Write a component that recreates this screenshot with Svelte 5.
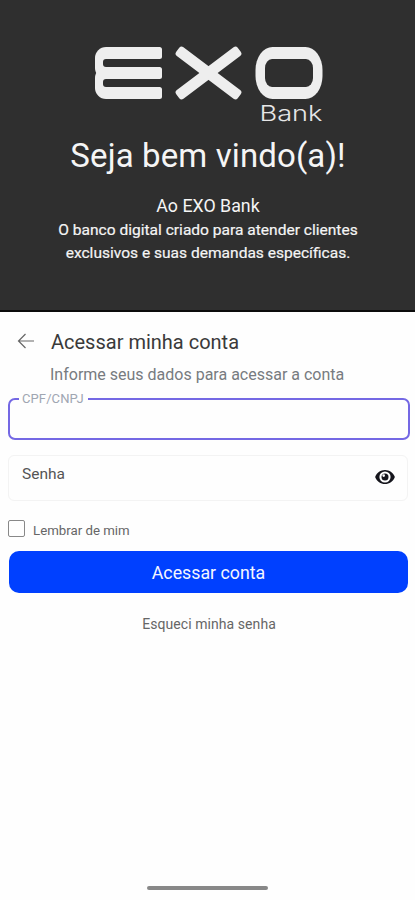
<script>
    let document = $state("");
    let password = $state("");
    let remember = $state(false);
    let visible = $state(false);
</script>

<div class="screen">
    <header>
        <svg class="logo" viewBox="0 0 236 86" role="img" aria-label="EXO Bank">
            <g fill="#eeeeee">
                <rect x="1" y="1" width="40" height="32" rx="11" />
                <rect x="1" y="21" width="40" height="32" rx="11" />
                <rect x="14" y="1" width="54" height="12" rx="2.5" />
                <rect x="14" y="21" width="54" height="12" rx="2.5" />
                <rect x="14" y="41" width="54" height="12" rx="2.5" />
                <rect x="76" y="21.5" width="77" height="11" rx="3" transform="rotate(37 114.5 27)" />
                <rect x="76" y="21.5" width="77" height="11" rx="3" transform="rotate(-37 114.5 27)" />
                <rect x="161.5" y="1" width="67" height="52" rx="17" ry="23" />
            </g>
            <g fill="#2f2f2f">
                <rect x="9" y="13" width="60" height="8" rx="3" />
                <rect x="9" y="33" width="60" height="8" rx="3" />
                <rect x="171" y="13" width="48" height="28" rx="7" ry="9" />
            </g>
            <text x="165.5" y="75" textLength="63" lengthAdjust="spacingAndGlyphs">Bank</text>
        </svg>
        <h1>Seja bem vindo(a)!</h1>
        <h2>Ao EXO Bank</h2>
        <p>O banco digital criado para atender clientes<br />exclusivos e suas demandas específicas.</p>
    </header>

    <main>
        <div class="title">
            <button class="back" aria-label="Voltar">
                <svg viewBox="0 0 18 16"><path d="M17 8H1.5M8.5 1L1.5 8l7 7" /></svg>
            </button>
            <h3>Acessar minha conta</h3>
        </div>
        <p class="subtitle">Informe seus dados para acessar a conta</p>

        <fieldset>
            <legend>CPF/CNPJ</legend>
            <input aria-label="CPF/CNPJ" bind:value={document} />
        </fieldset>

        <div class="password">
            <input type={visible ? "text" : "password"} placeholder="Senha" bind:value={password} />
            <button aria-label="Mostrar senha" onclick={() => visible = !visible}>
                <svg viewBox="0 0 20 14">
                    <path d="M10 0C5.5 0 2 2.800.4 6.300a1.500 1.500 0 0 0 0 1.400C2 11.200 5.500 14 10 14s8-2.800 9.600-6.300a1.500 1.500 0 0 0 0-1.400C18 2.800 14.500 0 10 0z" />
                    <circle cx="10" cy="7" r="5.600" fill="#fff" />
                    <circle cx="10" cy="7" r="3.500" />
                    <circle cx="8.700" cy="5.600" r="1.300" fill="#fff" />
                </svg>
            </button>
        </div>

        <label>
            <input type="checkbox" bind:checked={remember} />
            <span>Lembrar de mim</span>
        </label>

        <button class="submit">Acessar conta</button>
        <button class="forgot">Esqueci minha senha</button>
    </main>

    <div class="home"></div>
</div>

<style>
    :global(body) {
        margin: 0;
        background: #fefefe;
    }

    .screen {
        display: flex;
        flex-direction: column;
        height: 900px;
        font-family: Roboto, "Liberation Sans", sans-serif;
        background: #fefefe;
    }

    header {
        box-sizing: border-box;
        display: flex;
        flex-direction: column;
        align-items: center;
        height: 312px;
        padding: 46px 0 0 1px;
        color: #f5f5f5;
        text-align: center;
        background: #2f2f2f;
        border-bottom: 2px solid #0c0c0c;
    }

    .logo {
        width: 236px;
        height: 86px;
        flex-shrink: 0;
        margin-left: 7px;
        overflow: visible;
    }

    .logo text {
        fill: #e6e6e6;
        font-family: Inter, sans-serif;
        font-size: 22px;
        font-weight: 300;
    }

    h1, h2, h3, p {
        margin: 0;
        font-weight: 400;
    }

    h1 {
        margin-top: 4px;
        font-size: 33px;
        line-height: 40px;
        letter-spacing: 0.12px;
    }

    h2 {
        margin-top: 18px;
        font-size: 17.8px;
        line-height: 23px;
    }

    header p {
        margin-top: 2px;
        font-size: 15.55px;
        line-height: 22.5px;
        -webkit-text-stroke: 0.2px;
    }

    main {
        display: flex;
        flex-direction: column;
        flex: 1;
        padding: 0 5px 0 8px;
    }

    button {
        padding: 0;
        border: none;
        background: none;
        font-family: inherit;
        cursor: pointer;
    }

    .title {
        display: flex;
        align-items: center;
        gap: 16px;
        height: 28px;
        margin-top: 15px;
        padding-left: 9px;
    }

    .back {
        width: 18px;
        height: 18px;
    }

    .back svg {
        display: block;
        width: 18px;
        height: 16px;
        fill: none;
        stroke: #666;
        stroke-width: 1.2;
    }

    h3 {
        padding-top: 2px;
        color: #3a3a3a;
        font-size: 20px;
        line-height: 28px;
    }

    .subtitle {
        margin: 9px 0 0 42px;
        color: #777b80;
        font-size: 16px;
        line-height: 22px;
    }

    fieldset {
        box-sizing: border-box;
        height: 49px;
        min-width: 0;
        margin: 5px 0 0;
        padding: 0 9px;
        border: 2px solid #7468e4;
        border-radius: 7px;
    }

    legend {
        padding: 0 4px 0 3px;
        color: #a0a6b2;
        font-size: 13px;
        line-height: 16px;
        letter-spacing: 0.1px;
    }

    fieldset input, .password input {
        width: 100%;
        padding: 0;
        border: none;
        outline: none;
        background: none;
        font-family: inherit;
        font-size: 15.5px;
    }

    .password {
        box-sizing: border-box;
        display: flex;
        align-items: center;
        height: 46px;
        margin: 15px 2px 0 0;
        padding: 0 12px 0 13px;
        border: 1px solid #f3f3f3;
        border-radius: 6px;
    }

    .password input {
        height: 36px;
        margin-bottom: 8px;
    }

    .password input::placeholder {
        color: #555;
    }

    .password button {
        margin-bottom: 2px;
    }

    .password svg {
        display: block;
        width: 20px;
        height: 14px;
        fill: #15151c;
    }

    label {
        display: flex;
        align-items: center;
        gap: 8px;
        height: 20px;
        margin-top: 18px;
        color: #666;
        font-size: 13.25px;
    }

    label input {
        appearance: none;
        width: 17px;
        height: 17px;
        margin: 0 0 1px;
        border: 1px solid #888;
        border-radius: 2px;
    }

    label input:checked {
        background: #0040ff;
    }

    label span {
        padding-top: 3px;
    }

    .submit {
        height: 42px;
        margin: 12px 2px 0 1px;
        border-radius: 10px;
        color: #f4f6ff;
        background: #0040ff;
        font-size: 17.8px;
    }

    .forgot {
        align-self: center;
        margin-top: 20px;
        color: #666;
        font-size: 14px;
        line-height: 22px;
        letter-spacing: 0.07px;
    }

    .home {
        align-self: center;
        width: 121px;
        height: 4px;
        margin-bottom: 10px;
        border-radius: 2px;
        background: #888;
    }
</style>
